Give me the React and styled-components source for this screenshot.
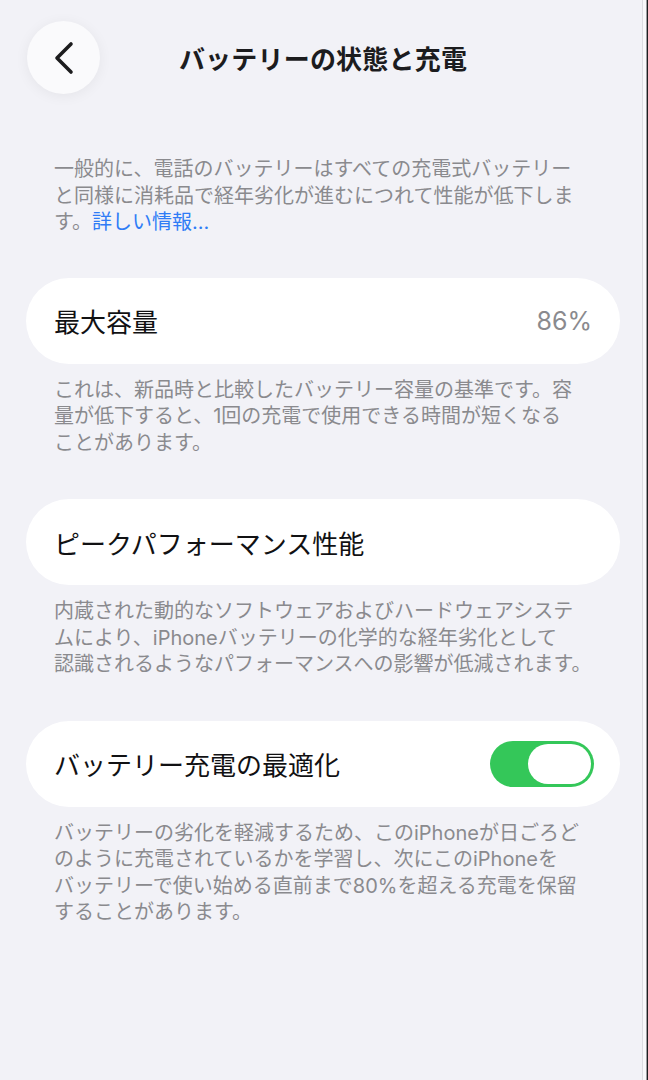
import React from 'react'
import styled, { createGlobalStyle } from 'styled-components'

const GlobalStyle = createGlobalStyle`
  html, body {
    margin: 0;
    padding: 0;
    background: #f2f2f7;
  }

  body {
    font-family: Inter, "Noto Sans CJK JP", sans-serif;
    -webkit-font-smoothing: antialiased;
  }
`

const Screen = styled.div`
  width: 648px;
  min-height: 1080px;
  box-sizing: border-box;
  background: #f2f2f7;
  box-shadow:
    inset -1px 0 0 #1e1e20,
    inset -2px 0 0 #9c9ca0,
    inset -5px 0 0 #f8f8fa,
    inset -6px 0 0 #dcdce1;
  padding: 21px 28px 0 26px;
`

const Header = styled.header`
  position: relative;
  height: 73px;
  display: flex;
  align-items: center;
  justify-content: center;
`

const BackButton = styled.button`
  position: absolute;
  left: 1px;
  top: 0;
  width: 73px;
  height: 73px;
  border: none;
  border-radius: 50%;
  background: #fafafc;
  box-shadow: 0 2px 14px rgba(0, 0, 0, 0.06);
  display: flex;
  align-items: center;
  justify-content: center;
  padding: 0;
`

const Title = styled.h1`
  margin: 0;
  font-size: 26px;
  font-weight: 700;
  color: #1c1c1e;
  letter-spacing: 0.2px;
`

const Content = styled.main`
  padding-top: 62px;
  display: flex;
  flex-direction: column;
`

const Note = styled.p`
  margin: 0;
  padding: 0 0 0 28px;
  font-size: 20px;
  line-height: 26.5px;
  color: #8a8a8e;
  white-space: nowrap;
`

const Intro = styled(Note)`
  margin-bottom: 42px;
`

const Footnote = styled(Note)`
  margin: 13px 0 43px;
`

const Link = styled.a`
  color: #2f7cf6;
  text-decoration: none;
`

const Card = styled.div`
  height: 86px;
  border-radius: 43px;
  background: #ffffff;
  display: flex;
  align-items: center;
  justify-content: space-between;
  padding: 0 26px 0 28px;
`

const Label = styled.span`
  font-size: 26px;
  color: #111113;
`

const Value = styled.span`
  font-size: 25px;
  color: #8a8a8e;
  padding-right: 2px;
`

const Toggle = styled.div`
  width: 104px;
  height: 46px;
  border-radius: 23px;
  background: #34c759;
  display: flex;
  align-items: center;
  justify-content: ${p => p.$on ? 'flex-end' : 'flex-start'};
  padding: 3px;
  box-sizing: border-box;
`

const Knob = styled.div`
  width: 63px;
  height: 40px;
  border-radius: 20px;
  background: #ffffff;
`

const Chevron = () => (
  <svg width="24" height="34" viewBox="0 0 24 34" fill="none">
    <path d="M19 3 L5 17 L19 31" stroke="#1c1c1e" strokeWidth="3.6" strokeLinecap="round" strokeLinejoin="round" />
  </svg>
)

const App = () => {
  return (
    <Screen>
      <GlobalStyle />
      <Header>
        <BackButton aria-label="戻る">
          <Chevron />
        </BackButton>
        <Title>バッテリーの状態と充電</Title>
      </Header>
      <Content>
        <Intro>
          一般的に、電話のバッテリーはすべての充電式バッテリー<br />
          と同様に消耗品で経年劣化が進むにつれて性能が低下しま<br />
          す。<Link href="#">詳しい情報...</Link>
        </Intro>

        <Card>
          <Label>最大容量</Label>
          <Value>86%</Value>
        </Card>
        <Footnote>
          これは、新品時と比較したバッテリー容量の基準です。容<br />
          量が低下すると、1回の充電で使用できる時間が短くなる<br />
          ことがあります。
        </Footnote>

        <Card>
          <Label>ピークパフォーマンス性能</Label>
        </Card>
        <Footnote>
          内蔵された動的なソフトウェアおよびハードウェアシステ<br />
          ムにより、iPhoneバッテリーの化学的な経年劣化として<br />
          認識されるようなパフォーマンスへの影響が低減されます。
        </Footnote>

        <Card>
          <Label>バッテリー充電の最適化</Label>
          <Toggle $on>
            <Knob />
          </Toggle>
        </Card>
        <Footnote>
          バッテリーの劣化を軽減するため、このiPhoneが日ごろど<br />
          のように充電されているかを学習し、次にこのiPhoneを<br />
          バッテリーで使い始める直前まで80%を超える充電を保留<br />
          することがあります。
        </Footnote>
      </Content>
    </Screen>
  )
}

export default App
